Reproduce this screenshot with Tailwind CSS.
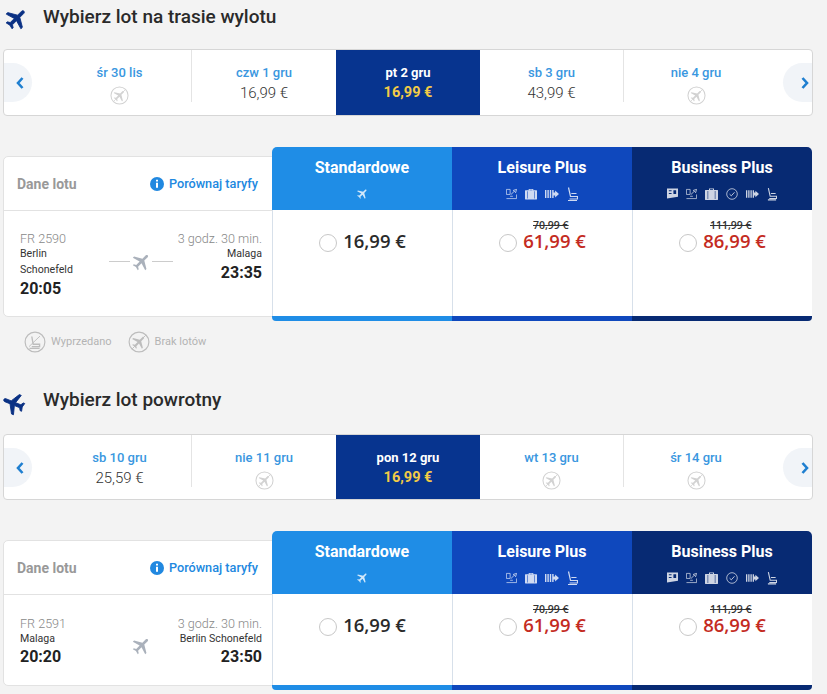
<!DOCTYPE html>
<html lang="pl">
<head>
<meta charset="utf-8">
<script src="https://cdn.jsdelivr.net/npm/@tailwindcss/browser@4"></script>
<title>Wybierz lot</title>
</head>
<body class="bg-[#f3f3f3] font-['Roboto',sans-serif] text-[#222] overflow-hidden">
<svg width="0" height="0" class="absolute">
  <defs>
    <symbol id="plane" viewBox="0 0 24 24"><path transform="rotate(45 12 12)" fill="currentColor" d="M22 16v-2l-8.500-5V3.500C13.500 2.670 12.830 2 12 2s-1.500.670-1.500 1.500V9L2 14v2l8.500-2.500V19L8 20.500V22l4-1 4 1v-1.500L13.500 19v-5.500z"/></symbol>
    <symbol id="noplane" viewBox="0 0 24 24"><circle cx="12" cy="12" r="10.800" fill="none" stroke="currentColor" stroke-width="1.300"/><path transform="rotate(45 12 12) translate(3 3) scale(.75)" fill="currentColor" d="M22 16v-2l-8.500-5V3.500C13.500 2.670 12.830 2 12 2s-1.500.670-1.500 1.500V9L2 14v2l8.500-2.500V19L8 20.500V22l4-1 4 1v-1.500L13.500 19v-5.500z"/><path d="M4.500 19.500 19.500 4.500" stroke="currentColor" stroke-width="1"/></symbol>
    <symbol id="noseat" viewBox="0 0 24 24"><circle cx="12" cy="12" r="10.800" fill="none" stroke="currentColor" stroke-width="1.300"/><path d="M8.500 6 10 14.500H17V17H8.500M6 19h11" fill="none" stroke="currentColor" stroke-width="1.500"/><path d="M5.500 17 17.500 5.500" stroke="currentColor" stroke-width="1"/></symbol>
    <symbol id="map" viewBox="0 0 12 12"><path d="M.5 1h4v5.500h-4zM.5 11h11V6.500M4.500 8.500h3" fill="none" stroke="currentColor" stroke-width=".8"/><path d="M5.500 6.500 9 3l1.500 1.500L11.500 1 8 2l1 1" fill="none" stroke="currentColor" stroke-width=".9"/></symbol>
    <symbol id="bag" viewBox="0 0 13 12"><path fill-rule="evenodd" fill="currentColor" d="M4 2V.500h5V2h3.500c.300 0 .500.200.500.500v9c0 .300-.200.500-.500.500H.500c-.300 0-.500-.200-.500-.500v-9C0 2.200.200 2 .500 2zm1 0h3V1.300H5zM2.600 3v8h.600V3zm7.200 0v8h.600V3z"/></symbol>
    <symbol id="fast" viewBox="0 0 14 12"><path fill="currentColor" d="M0 2h1.400v8H0zM2.400 2h1.400v8H2.400zM4.800 2h1.400v8H4.800zM7.200 2h1.400v2.500h1.500V2.500L14 6l-3.900 3.500v-2H8.600V10H7.200z"/></symbol>
    <symbol id="seat" viewBox="0 0 11 14"><path d="M1.500.500 3.500 9.500H10.500V12H2.500M4.300 6.500H9.500M1 13.500h9" fill="none" stroke="currentColor" stroke-width="1.200"/></symbol>
    <symbol id="check" viewBox="0 0 12 12"><circle cx="6" cy="6" r="5.300" fill="none" stroke="currentColor" stroke-width=".8"/><path d="M3.600 6.200 5.300 7.800 8.500 4.300" fill="none" stroke="currentColor" stroke-width=".9"/></symbol>
    <symbol id="news" viewBox="0 0 12 11"><path fill-rule="evenodd" fill="currentColor" d="M0 0h12v9L0 11zM2 2v1h3V2zm5 0v4h3V2zM2 5v1h3V5z"/></symbol>
  </defs>
</svg>

<main class="w-[827px] h-[694px] overflow-hidden">
  <!-- WYLOT -->
  <section>
    <header class="h-[49px] flex items-start pl-[4px] pt-[6px]">
      <svg class="w-[25px] h-[25px] text-[#0a3184]" stroke="currentColor" stroke-width=".8"><use href="#plane"/></svg>
      <h2 class="ml-[14px] mt-[-1px] text-[19px] leading-[24px] font-medium text-[#2a2a2a]">Wybierz lot na trasie wylotu</h2>
    </header>
    <div class="ml-[3px] w-[810px] h-[67px] bg-white border border-[#d6d6d6] rounded-[4px] flex items-stretch relative">
      <button class="absolute left-0 top-[13px] w-[28px] h-[39px] bg-[#f1f4f8] rounded-r-[20px] flex items-center justify-center pl-[4px]"><svg class="w-[10px] h-[14px] text-[#1f7fd0]" viewBox="0 0 10 14"><path d="M7.500 2 3 7l4.500 5" fill="none" stroke="currentColor" stroke-width="2.600"/></svg></button>
      <div class="w-[44px]"></div>
      <div class="w-[144px] h-[52px] border-r border-[#e4e4e4] flex flex-col items-center pt-[15px]">
        <span class="text-[13px] leading-[16px] font-medium text-[#3a97e0]">śr 30 lis</span>
        <svg class="w-[19px] h-[19px] mt-[5px] shrink-0 text-[#d2d2d2]"><use href="#noplane"/></svg>
      </div>
      <div class="w-[144px] pt-[15px] flex flex-col items-center">
        <span class="text-[13px] leading-[16px] font-medium text-[#3a97e0]">czw 1 gru</span>
        <span class="text-[15px] leading-[20px] mt-[2px] font-light text-[#333]">16,99 €</span>
      </div>
      <div class="w-[144px] bg-[#07348f] pt-[15px] flex flex-col items-center">
        <span class="text-[13px] leading-[16px] font-bold text-white">pt 2 gru</span>
        <span class="text-[14.500px] leading-[20px] mt-[2px] font-bold text-[#f2cb46]">16,99 €</span>
      </div>
      <div class="w-[144px] h-[52px] border-r border-[#e4e4e4] pt-[15px] flex flex-col items-center">
        <span class="text-[13px] leading-[16px] font-medium text-[#3a97e0]">sb 3 gru</span>
        <span class="text-[15px] leading-[20px] mt-[2px] font-light text-[#333]">43,99 €</span>
      </div>
      <div class="w-[144px] pt-[15px] flex flex-col items-center">
        <span class="text-[13px] leading-[16px] font-medium text-[#3a97e0]">nie 4 gru</span>
        <svg class="w-[19px] h-[19px] mt-[5px] text-[#d2d2d2]"><use href="#noplane"/></svg>
      </div>
      <button class="absolute right-0 top-[13px] w-[29px] h-[39px] bg-[#f1f4f8] rounded-l-[20px] flex items-center justify-center pl-[14px]"><svg class="w-[10px] h-[14px] shrink-0 text-[#1f7fd0]" viewBox="0 0 10 14"><path d="M2.500 2 7 7l-4.500 5" fill="none" stroke="currentColor" stroke-width="2.600"/></svg></button>
    </div>

    <div class="mt-[31px] ml-[3px] flex items-start">
      <div class="mt-[9px] w-[270px] h-[161px] bg-white border border-[#e2e2e2] rounded-l-[5px]">
        <div class="h-[54px] border-b border-[#e2e2e2] flex items-center justify-between pl-[13px] pr-[14px] pt-px">
          <span class="text-[14px] font-bold text-[#999]">Dane lotu</span>
          <span class="flex items-center gap-[5px] text-[12.700px] font-medium text-[#2188e0]"><svg class="w-[14px] h-[14px]" viewBox="0 0 14 14"><circle cx="7" cy="7" r="7" fill="currentColor"/><path d="M7 5.800v5M7 2.800v1.700" stroke="#fff" stroke-width="2"/></svg>Porównaj taryfy</span>
        </div>
        <div class="flex pl-[16px] pr-[10px] pt-[20px]">
          <div class="w-[60px] whitespace-nowrap">
            <div class="text-[12.600px] leading-[15px] font-light text-[#888]">FR 2590</div>
            <div class="text-[10.600px] leading-[16px] text-[#333]">Berlin<br>Schonefeld</div>
            <div class="text-[16px] leading-[21px] font-bold">20:05</div>
          </div>
          <div class="flex items-center self-start mt-[20px] ml-[29px]">
            <span class="block w-[21px] h-px bg-[#ccc]"></span>
            <svg class="w-[21px] h-[21px] ml-[1px] text-[#aab1bb]"><use href="#plane"/></svg>
            <span class="block w-[21px] h-px bg-[#ccc]"></span>
          </div>
          <div class="flex-1 text-right whitespace-nowrap">
            <div class="text-[12.600px] leading-[15px] font-light text-[#888]">3 godz. 30 min.</div>
            <div class="text-[10.600px] leading-[16px] text-[#333]">Malaga</div>
            <div class="text-[16px] leading-[21px] font-bold">23:35</div>
          </div>
        </div>
      </div>

      <div class="ml-[-1px] w-[540px] h-[174px] grid grid-cols-3 relative">
        <div class="flex flex-col">
          <div class="h-[63px] bg-[#1f8de6] rounded-tl-[5px] text-white flex flex-col items-center pt-[12px]">
            <div class="text-[16px] leading-[18px] font-bold">Standardowe</div>
            <svg class="w-[13px] h-[13px] mt-[10px] text-white/80"><use href="#plane"/></svg>
          </div>
          <div class="flex-1 bg-white border-l border-[#d7e0ea] relative flex justify-center pt-[21px]">
            <span class="flex items-center gap-[6px] h-[20px]"><span class="block w-[18px] h-[18px] mt-[4px] rounded-full border border-[#c8c8c8] bg-white"></span><span class="font-['Open_Sans',sans-serif] text-[18.500px] leading-[20px] font-semibold text-[#2a2a2a]">16,99 €</span></span>
          </div>
          <div class="h-[5px] bg-[#1f8de6] rounded-bl-[4px]"></div>
        </div>
        <div class="flex flex-col">
          <div class="h-[63px] bg-[#0f48bd] text-white flex flex-col items-center pt-[12px]">
            <div class="text-[16px] leading-[18px] font-bold">Leisure Plus</div>
            <div class="flex items-center gap-[8px] mt-[10px] h-[13px] text-white/80">
              <svg class="w-[11px] h-[12px]"><use href="#map"/></svg><svg class="w-[12px] h-[12px]"><use href="#bag"/></svg><svg class="w-[14px] h-[12px]"><use href="#fast"/></svg><svg class="w-[11px] h-[14px]"><use href="#seat"/></svg>
            </div>
          </div>
          <div class="flex-1 bg-white border-l border-[#d7e0ea] relative flex justify-center pt-[21px]">
            <span class="absolute top-[9px] left-[80px] font-['Open_Sans',sans-serif] text-[10.500px] leading-[12px] font-semibold line-through text-[#333]">70,99 €</span>
            <span class="flex items-center gap-[6px] h-[20px]"><span class="block w-[18px] h-[18px] mt-[4px] rounded-full border border-[#c8c8c8] bg-white"></span><span class="font-['Open_Sans',sans-serif] text-[18.500px] leading-[20px] font-semibold text-[#c42b22]">61,99 €</span></span>
          </div>
          <div class="h-[5px] bg-[#0f48bd]"></div>
        </div>
        <div class="flex flex-col">
          <div class="h-[63px] bg-[#072a73] rounded-tr-[5px] text-white flex flex-col items-center pt-[12px]">
            <div class="text-[16px] leading-[18px] font-bold">Business Plus</div>
            <div class="flex items-center gap-[8px] mt-[10px] h-[13px] text-white/80">
              <svg class="w-[11px] h-[11px]"><use href="#news"/></svg><svg class="w-[11px] h-[12px]"><use href="#map"/></svg><svg class="w-[13px] h-[12px]"><use href="#bag"/></svg><svg class="w-[12px] h-[12px]"><use href="#check"/></svg><svg class="w-[13px] h-[12px]"><use href="#fast"/></svg><svg class="w-[10px] h-[14px]"><use href="#seat"/></svg>
            </div>
          </div>
          <div class="flex-1 bg-white border-l border-[#d7e0ea] relative flex justify-center pt-[21px]">
            <span class="absolute top-[9px] left-[77px] font-['Open_Sans',sans-serif] text-[10.500px] leading-[12px] font-semibold line-through text-[#333]">111,99 €</span>
            <span class="flex items-center gap-[6px] h-[20px]"><span class="block w-[18px] h-[18px] mt-[4px] rounded-full border border-[#c8c8c8] bg-white"></span><span class="font-['Open_Sans',sans-serif] text-[18.500px] leading-[20px] font-semibold text-[#c42b22]">86,99 €</span></span>
          </div>
          <div class="h-[5px] bg-[#072a73] rounded-br-[4px]"></div>
        </div>
      </div>
    </div>

    <div class="flex items-center ml-[24px] mt-[10px] h-[22px] text-[11px] text-[#b3b3b3]">
      <svg class="w-[22px] h-[22px] text-[#bdbdbd]"><use href="#noseat"/></svg>
      <span class="ml-[5px]">Wyprzedano</span>
      <svg class="w-[22px] h-[22px] ml-[16px] text-[#bdbdbd]"><use href="#noplane"/></svg>
      <span class="ml-[5px]">Brak lotów</span>
    </div>
  </section>

  <!-- POWROT -->
  <section class="mt-[36px]">
    <header class="h-[45px] flex items-start pl-[1px]">
      <svg class="w-[25px] h-[25px] mt-[2px] text-[#0a3184] rotate-[-113deg]" stroke="currentColor" stroke-width=".8"><use href="#plane"/></svg>
      <h2 class="ml-[17px] -mt-[1px] text-[19px] leading-[24px] font-medium text-[#2a2a2a]">Wybierz lot powrotny</h2>
    </header>
    <div class="ml-[3px] w-[810px] h-[66px] bg-white border border-[#d6d6d6] rounded-[4px] flex items-stretch relative">
      <button class="absolute left-0 top-[13px] w-[28px] h-[39px] bg-[#f1f4f8] rounded-r-[20px] flex items-center justify-center pl-[4px]"><svg class="w-[10px] h-[14px] text-[#1f7fd0]" viewBox="0 0 10 14"><path d="M7.500 2 3 7l4.500 5" fill="none" stroke="currentColor" stroke-width="2.600"/></svg></button>
      <div class="w-[44px]"></div>
      <div class="w-[144px] h-[52px] border-r border-[#e4e4e4] pt-[15px] flex flex-col items-center">
        <span class="text-[13px] leading-[16px] font-medium text-[#3a97e0]">sb 10 gru</span>
        <span class="text-[15px] leading-[20px] mt-[2px] font-light text-[#333]">25,59 €</span>
      </div>
      <div class="w-[144px] pt-[15px] flex flex-col items-center">
        <span class="text-[13px] leading-[16px] font-medium text-[#3a97e0]">nie 11 gru</span>
        <svg class="w-[19px] h-[19px] mt-[5px] text-[#d2d2d2]"><use href="#noplane"/></svg>
      </div>
      <div class="w-[144px] bg-[#07348f] pt-[15px] flex flex-col items-center">
        <span class="text-[13px] leading-[16px] font-bold text-white">pon 12 gru</span>
        <span class="text-[14.500px] leading-[20px] mt-[2px] font-bold text-[#f2cb46]">16,99 €</span>
      </div>
      <div class="w-[144px] h-[52px] border-r border-[#e4e4e4] pt-[15px] flex flex-col items-center">
        <span class="text-[13px] leading-[16px] font-medium text-[#3a97e0]">wt 13 gru</span>
        <svg class="w-[19px] h-[19px] mt-[5px] shrink-0 text-[#d2d2d2]"><use href="#noplane"/></svg>
      </div>
      <div class="w-[144px] pt-[15px] flex flex-col items-center">
        <span class="text-[13px] leading-[16px] font-medium text-[#3a97e0]">śr 14 gru</span>
        <svg class="w-[19px] h-[19px] mt-[5px] text-[#d2d2d2]"><use href="#noplane"/></svg>
      </div>
      <button class="absolute right-0 top-[13px] w-[29px] h-[39px] bg-[#f1f4f8] rounded-l-[20px] flex items-center justify-center pl-[14px]"><svg class="w-[10px] h-[14px] shrink-0 text-[#1f7fd0]" viewBox="0 0 10 14"><path d="M2.500 2 7 7l-4.500 5" fill="none" stroke="currentColor" stroke-width="2.600"/></svg></button>
    </div>

    <div class="mt-[31px] ml-[3px] flex items-start">
      <div class="mt-[9px] w-[270px] h-[146px] bg-white border border-[#e2e2e2] rounded-l-[5px]">
        <div class="h-[54px] border-b border-[#e2e2e2] flex items-center justify-between pl-[13px] pr-[14px] pt-px">
          <span class="text-[14px] font-bold text-[#999]">Dane lotu</span>
          <span class="flex items-center gap-[5px] text-[12.700px] font-medium text-[#2188e0]"><svg class="w-[14px] h-[14px]" viewBox="0 0 14 14"><circle cx="7" cy="7" r="7" fill="currentColor"/><path d="M7 5.800v5M7 2.800v1.700" stroke="#fff" stroke-width="2"/></svg>Porównaj taryfy</span>
        </div>
        <div class="flex pl-[16px] pr-[10px] pt-[21px]">
          <div class="w-[60px] whitespace-nowrap">
            <div class="text-[12.600px] leading-[15px] font-light text-[#888]">FR 2591</div>
            <div class="text-[10.600px] leading-[16px] text-[#333]">Malaga</div>
            <div class="text-[16px] leading-[20px] font-bold">20:20</div>
          </div>
          <div class="self-start mt-[19px] ml-[51px]">
            <svg class="w-[21px] h-[21px] text-[#aab1bb]"><use href="#plane"/></svg>
          </div>
          <div class="flex-1 text-right whitespace-nowrap">
            <div class="text-[12.600px] leading-[15px] font-light text-[#888]">3 godz. 30 min.</div>
            <div class="text-[10.600px] leading-[16px] text-[#333]">Berlin Schonefeld</div>
            <div class="text-[16px] leading-[20px] font-bold">23:50</div>
          </div>
        </div>
      </div>

      <div class="ml-[-1px] w-[540px] h-[159px] grid grid-cols-3 relative">
        <div class="flex flex-col">
          <div class="h-[63px] bg-[#1f8de6] rounded-tl-[5px] text-white flex flex-col items-center pt-[12px]">
            <div class="text-[16px] leading-[18px] font-bold">Standardowe</div>
            <svg class="w-[13px] h-[13px] mt-[10px] text-white/80"><use href="#plane"/></svg>
          </div>
          <div class="flex-1 bg-white border-l border-[#d7e0ea] relative flex justify-center pt-[21px]">
            <span class="flex items-center gap-[6px] h-[20px]"><span class="block w-[18px] h-[18px] mt-[4px] rounded-full border border-[#c8c8c8] bg-white"></span><span class="font-['Open_Sans',sans-serif] text-[18.500px] leading-[20px] font-semibold text-[#2a2a2a]">16,99 €</span></span>
          </div>
          <div class="h-[5px] bg-[#1f8de6] rounded-bl-[4px]"></div>
        </div>
        <div class="flex flex-col">
          <div class="h-[63px] bg-[#0f48bd] text-white flex flex-col items-center pt-[12px]">
            <div class="text-[16px] leading-[18px] font-bold">Leisure Plus</div>
            <div class="flex items-center gap-[8px] mt-[10px] h-[13px] text-white/80">
              <svg class="w-[11px] h-[12px]"><use href="#map"/></svg><svg class="w-[12px] h-[12px]"><use href="#bag"/></svg><svg class="w-[14px] h-[12px]"><use href="#fast"/></svg><svg class="w-[11px] h-[14px]"><use href="#seat"/></svg>
            </div>
          </div>
          <div class="flex-1 bg-white border-l border-[#d7e0ea] relative flex justify-center pt-[21px]">
            <span class="absolute top-[9px] left-[80px] font-['Open_Sans',sans-serif] text-[10.500px] leading-[12px] font-semibold line-through text-[#333]">70,99 €</span>
            <span class="flex items-center gap-[6px] h-[20px]"><span class="block w-[18px] h-[18px] mt-[4px] rounded-full border border-[#c8c8c8] bg-white"></span><span class="font-['Open_Sans',sans-serif] text-[18.500px] leading-[20px] font-semibold text-[#c42b22]">61,99 €</span></span>
          </div>
          <div class="h-[5px] bg-[#0f48bd]"></div>
        </div>
        <div class="flex flex-col">
          <div class="h-[63px] bg-[#072a73] rounded-tr-[5px] text-white flex flex-col items-center pt-[12px]">
            <div class="text-[16px] leading-[18px] font-bold">Business Plus</div>
            <div class="flex items-center gap-[8px] mt-[10px] h-[13px] text-white/80">
              <svg class="w-[11px] h-[11px]"><use href="#news"/></svg><svg class="w-[11px] h-[12px]"><use href="#map"/></svg><svg class="w-[13px] h-[12px]"><use href="#bag"/></svg><svg class="w-[12px] h-[12px]"><use href="#check"/></svg><svg class="w-[13px] h-[12px]"><use href="#fast"/></svg><svg class="w-[10px] h-[14px]"><use href="#seat"/></svg>
            </div>
          </div>
          <div class="flex-1 bg-white border-l border-[#d7e0ea] relative flex justify-center pt-[21px]">
            <span class="absolute top-[9px] left-[77px] font-['Open_Sans',sans-serif] text-[10.500px] leading-[12px] font-semibold line-through text-[#333]">111,99 €</span>
            <span class="flex items-center gap-[6px] h-[20px]"><span class="block w-[18px] h-[18px] mt-[4px] rounded-full border border-[#c8c8c8] bg-white"></span><span class="font-['Open_Sans',sans-serif] text-[18.500px] leading-[20px] font-semibold text-[#c42b22]">86,99 €</span></span>
          </div>
          <div class="h-[5px] bg-[#072a73] rounded-br-[4px]"></div>
        </div>
      </div>
    </div>
  </section>
</main>
</body>
</html>
